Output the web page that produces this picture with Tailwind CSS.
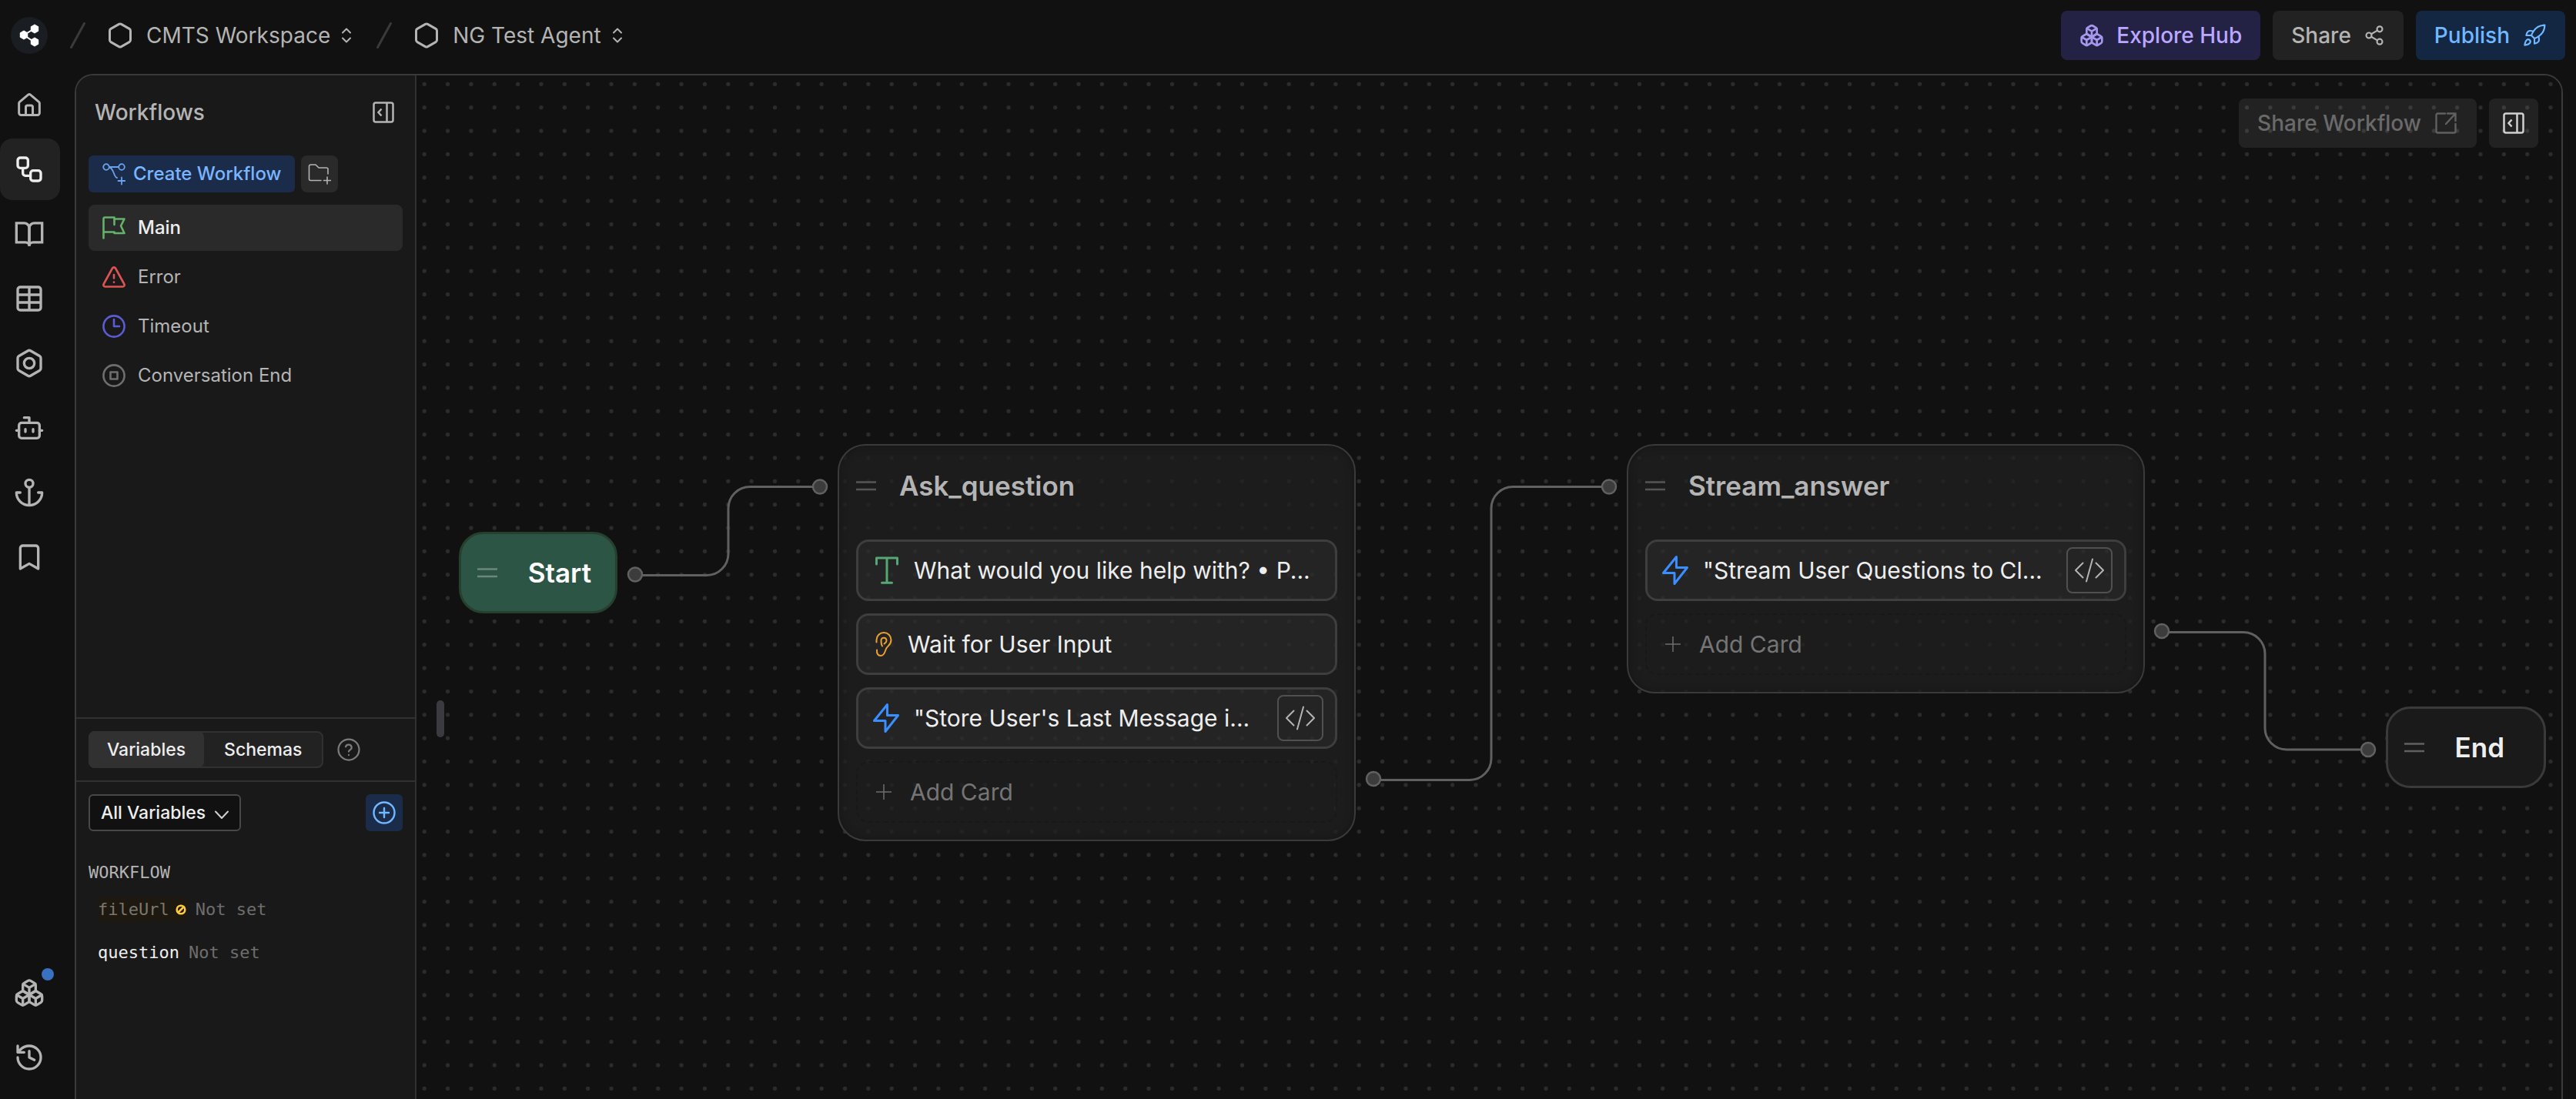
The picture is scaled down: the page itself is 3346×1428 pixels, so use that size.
<!DOCTYPE html>
<html lang="en">
<head>
<meta charset="utf-8">
<title>NG Test Agent – Workflows</title>
<meta name="viewport" content="width=device-width, initial-scale=1">
<script src="https://cdn.jsdelivr.net/npm/@tailwindcss/browser@4"></script>
</head>
<body class="bg-[#111111] text-[#b4b4b4] font-['Inter',sans-serif] antialiased">

<!-- Shared icon symbols -->
<svg class="hidden" aria-hidden="true">
  <symbol id="i-home" viewBox="0 0 24 24"><path d="M3.7 9.6 11 3.4a1.6 1.6 0 0 1 2 0l7.300 6.200a1.600 1.600 0 0 1 .6 1.200V19.200a1.800 1.800 0 0 1-1.800 1.800H4.900a1.800 1.800 0 0 1-1.800-1.800V10.800a1.600 1.600 0 0 1 .6-1.200Z"/><path d="M9 21v-6.800a1.500 1.500 0 0 1 1.500-1.500h3a1.500 1.500 0 0 1 1.500 1.500V21"/></symbol>
  <symbol id="i-flow" viewBox="0 0 24 24"><rect x="3" y="3" width="8" height="8" rx="2"/><path d="M7 11v4a2 2 0 0 0 2 2h4"/><rect x="13" y="13" width="8" height="8" rx="2"/></symbol>
  <symbol id="i-book" viewBox="0 0 24 24"><path d="M2 3.500h6a4 4 0 0 1 4 4v14a3 3 0 0 0-3-3H2z"/><path d="M22 3.500h-6a4 4 0 0 0-4 4v14a3 3 0 0 1 3-3h7z"/></symbol>
  <symbol id="i-table" viewBox="0 0 24 24"><rect x="3" y="3" width="18" height="18" rx="2"/><path d="M12 3v18M3 9h18M3 15h18"/></symbol>
  <symbol id="i-hex" viewBox="0 0 24 24"><path d="M21 16V8a2 2 0 0 0-1-1.730l-7-4a2 2 0 0 0-2 0l-7 4A2 2 0 0 0 3 8v8a2 2 0 0 0 1 1.730l7 4a2 2 0 0 0 2 0l7-4A2 2 0 0 0 21 16z"/></symbol>
  <symbol id="i-nut" viewBox="0 0 24 24"><path d="M21 16V8a2 2 0 0 0-1-1.730l-7-4a2 2 0 0 0-2 0l-7 4A2 2 0 0 0 3 8v8a2 2 0 0 0 1 1.730l7 4a2 2 0 0 0 2 0l7-4A2 2 0 0 0 21 16z"/><circle cx="12" cy="12" r="4"/></symbol>
  <symbol id="i-bot" viewBox="0 0 24 24"><path d="M12 8V4H8M2 14h2M20 14h2M15 13v2M9 13v2"/><rect x="4" y="8" width="16" height="12" rx="2"/></symbol>
  <symbol id="i-anchor" viewBox="0 0 24 24"><circle cx="12" cy="5" r="3"/><path d="M12 22V8M5 12H2a10 10 0 0 0 20 0h-3"/></symbol>
  <symbol id="i-mark" viewBox="0 0 24 24"><path d="m19 21-7-4-7 4V5a2 2 0 0 1 2-2h10a2 2 0 0 1 2 2v16z"/></symbol>
  <symbol id="i-boxes" viewBox="0 0 24 24"><path d="M2.970 12.920A2 2 0 0 0 2 14.630v3.240a2 2 0 0 0 .970 1.710l3 1.800a2 2 0 0 0 2.060 0L12 19v-5.500l-5-3-4.030 2.420Z"/><path d="m7 16.500-4.740-2.850M7 16.500l5-3M7 16.500v5.170"/><path d="M12 13.500V19l3.970 2.380a2 2 0 0 0 2.060 0l3-1.800a2 2 0 0 0 .970-1.710v-3.240a2 2 0 0 0-.970-1.710L17 10.500l-5 3Z"/><path d="m17 16.500-5-3M17 16.500l4.740-2.850M17 16.500v5.170"/><path d="M7.970 4.420A2 2 0 0 0 7 6.130v4.370l5 3 5-3V6.130a2 2 0 0 0-.970-1.710l-3-1.800a2 2 0 0 0-2.060 0l-3 1.800Z"/><path d="M12 8 7.260 5.150M12 8l4.740-2.850M12 13.500V8"/></symbol>
  <symbol id="i-history" viewBox="0 0 24 24"><path d="M3 12a9 9 0 1 0 9-9 9.750 9.750 0 0 0-6.740 2.740L3 8M3 3v5h5M12 7v5l4 2"/></symbol>
  <symbol id="i-share" viewBox="0 0 24 24"><circle cx="18" cy="5" r="3"/><circle cx="6" cy="12" r="3"/><circle cx="18" cy="19" r="3"/><path d="m8.600 13.500 6.800 4M15.400 6.500l-6.800 4"/></symbol>
  <symbol id="i-rocket" viewBox="0 0 24 24"><path d="M4.500 16.500c-1.500 1.260-2 5-2 5s3.740-.5 5-2c.71-.84.7-2.130-.09-2.910a2.180 2.180 0 0 0-2.910-.09z"/><path d="m12 15-3-3a22 22 0 0 1 2-3.950A12.880 12.880 0 0 1 22 2c0 2.720-.78 7.500-6 11a22.350 22.350 0 0 1-4 2z"/><path d="M9 12H4s.55-3.030 2-4c1.620-1.080 5 0 5 0M12 15v5s3.030-.55 4-2c1.080-1.620 0-5 0-5"/></symbol>
  <symbol id="i-updown" viewBox="0 0 20 24"><path d="M5 8.500 10 3.500l5 5M5 15.500l5 5 5-5"/></symbol>
  <symbol id="i-slash" viewBox="0 0 20 34"><path d="M18.500 1.500 1.500 32.500"/></symbol>
  <symbol id="i-panel" viewBox="0 0 28 28"><rect x="1.500" y="1.500" width="25" height="25" rx="2.500"/><path d="M18.500 1.500v25M11.500 9.500 7.500 14l4 4.500"/></symbol>
  <symbol id="i-bolt" viewBox="0 0 36 40"><path d="M19.500 2.500 2.500 23.500H17V37.500L33.500 16.500H19.500Z"/></symbol>
  <symbol id="i-code" viewBox="0 0 40 32"><path d="M11.500 6.500 2 16l9.500 9.500M28.500 6.500 38 16l-9.500 9.500M24 1.500 16 30.500"/></symbol>
  <symbol id="i-handle" viewBox="0 0 26 14"><path d="M0 2.500h26M0 12h26"/></symbol>
  <symbol id="i-plus" viewBox="0 0 20 20"><path d="M10 0v20M0 10h20"/></symbol>
</svg>

<div class="flex min-h-screen flex-col">

  <!-- Top bar -->
  <header class="flex h-24 shrink-0 items-center justify-between pl-[14px] pr-[14px] pb-1">
    <nav class="flex items-center text-[28px] leading-9" aria-label="Breadcrumb">
      <a href="#" aria-label="Home" class="flex size-12 items-center justify-center rounded-full bg-[#1a1d22]">
        <svg class="h-[30px] w-[26px]" viewBox="0 0 26 30" fill="#fff" stroke="#fff"><path d="M20 6 6 14.500 20 24" fill="none" stroke-width="2"/><path stroke-width="2" stroke-linejoin="round" d="m20 1.500 4.200 2.500v5L20 11.500 15.800 9V4ZM6 9.500l4.200 2.500v5L6 19.500 1.800 17v-5ZM20 18.500l4.200 2.500v5L20 28.500 15.800 26v-5Z"/></svg>
      </a>
      <svg class="mx-[29px] h-[34px] w-5 fill-none stroke-[#3a3a3a] stroke-[3px]" stroke-linecap="round"><use href="#i-slash"/></svg>
      <button class="flex items-center">
        <svg class="size-9 -mx-[2px] fill-none stroke-[#b4b4b4] stroke-2" stroke-linejoin="round"><use href="#i-hex"/></svg>
        <span class="ml-[18px]">CMTS Workspace</span>
        <svg class="ml-[11px] h-6 w-5 fill-none stroke-[#b4b4b4] stroke-2" stroke-linecap="round" stroke-linejoin="round"><use href="#i-updown"/></svg>
      </button>
      <svg class="mx-[29px] h-[34px] w-5 fill-none stroke-[#3a3a3a] stroke-[3px]" stroke-linecap="round"><use href="#i-slash"/></svg>
      <button class="flex items-center">
        <svg class="size-9 -mx-[2px] fill-none stroke-[#b4b4b4] stroke-2" stroke-linejoin="round"><use href="#i-hex"/></svg>
        <span class="ml-[18px]">NG Test Agent</span>
        <svg class="ml-[11px] h-6 w-5 fill-none stroke-[#b4b4b4] stroke-2" stroke-linecap="round" stroke-linejoin="round"><use href="#i-updown"/></svg>
      </button>
    </nav>
    <div class="flex items-center gap-4 text-[28px] font-medium leading-9">
      <button class="flex h-16 items-center gap-4 rounded-lg bg-[#232144] px-6 text-[#baa7ff]">
        <svg class="size-8 fill-none stroke-[#a598ec] stroke-2" stroke-linecap="round" stroke-linejoin="round"><use href="#i-boxes"/></svg>
        Explore Hub
      </button>
      <button class="flex h-16 items-center gap-4 rounded-lg bg-[#222222] px-6">
        Share
        <svg class="size-7 fill-none stroke-[#b4b4b4] stroke-[1.800px]" stroke-linecap="round"><use href="#i-share"/></svg>
      </button>
      <button class="flex h-16 items-center gap-4 rounded-lg bg-[#132743] px-6 text-[#70b8ff]">
        Publish
        <svg class="size-8 fill-none stroke-[#70b8ff] stroke-[1.600px]" stroke-linecap="round" stroke-linejoin="round"><use href="#i-rocket"/></svg>
      </button>
    </div>
  </header>

  <div class="flex flex-1 pr-[17px]">

    <!-- Icon rail -->
    <nav class="flex w-[97px] shrink-0 flex-col justify-between pb-[14px]" aria-label="Main">
      <ul class="flex flex-col gap-1 fill-none stroke-[#b4b4b4] stroke-2">
        <li><a href="#" aria-label="Home" class="flex h-20 w-[78px] items-center justify-center pr-[2px]"><svg class="size-9" stroke-linejoin="round"><use href="#i-home"/></svg></a></li>
        <li><a href="#" aria-label="Workflows" aria-current="page" class="flex h-20 w-[78px] items-center justify-center rounded-2xl bg-[#222222] stroke-[#eeeeee] pr-[2px]"><svg class="size-10"><use href="#i-flow"/></svg></a></li>
        <li><a href="#" aria-label="Knowledge" class="flex h-20 w-[78px] items-center justify-center pr-[2px]"><svg class="size-10"><use href="#i-book"/></svg></a></li>
        <li><a href="#" aria-label="Tables" class="flex h-20 w-[78px] items-center justify-center pr-[2px]"><svg class="size-10"><use href="#i-table"/></svg></a></li>
        <li><a href="#" aria-label="Integrations" class="flex h-20 w-[78px] items-center justify-center pr-[2px]"><svg class="size-10"><use href="#i-nut"/></svg></a></li>
        <li><a href="#" aria-label="Agents" class="flex h-20 w-[78px] items-center justify-center pr-[2px]"><svg class="size-10" stroke-linecap="round" stroke-linejoin="round"><use href="#i-bot"/></svg></a></li>
        <li><a href="#" aria-label="Hooks" class="flex h-20 w-[78px] items-center justify-center pr-[2px]"><svg class="size-10" stroke-linecap="round" stroke-linejoin="round"><use href="#i-anchor"/></svg></a></li>
        <li><a href="#" aria-label="Library" class="flex h-20 w-[78px] items-center justify-center pr-[2px]"><svg class="size-10" stroke-linejoin="round"><use href="#i-mark"/></svg></a></li>
      </ul>
      <ul class="flex flex-col gap-1 fill-none stroke-[#b4b4b4] stroke-2">
        <li><a href="#" aria-label="Hub" class="relative flex h-20 w-[78px] items-center justify-center pr-[2px]"><svg class="size-10" stroke-linecap="round" stroke-linejoin="round"><use href="#i-boxes"/></svg><span class="absolute right-2 top-2 size-4 rounded-full bg-[#3b6fbf]"></span></a></li>
        <li><a href="#" aria-label="History" class="flex h-20 w-[78px] items-center justify-center pr-[2px]"><svg class="size-10" stroke-linecap="round" stroke-linejoin="round"><use href="#i-history"/></svg></a></li>
      </ul>
    </nav>

    <div class="flex flex-1 overflow-hidden rounded-t-3xl border-x-2 border-t-2 border-[#3a3a3a]">

      <!-- Workflow panel -->
      <aside class="flex w-[442px] shrink-0 flex-col border-r-2 border-[#313131] bg-[#191919] text-[24px] leading-8">
        <section class="flex-1">
          <div class="flex h-24 items-center justify-between pl-6 pr-[27px]">
            <h2 class="text-[28px] font-medium leading-9">Workflows</h2>
            <button aria-label="Collapse panel"><svg class="size-7 fill-none stroke-[#b4b4b4] stroke-[2.500px]"><use href="#i-panel"/></svg></button>
          </div>
          <div class="flex gap-2 px-4 pt-2">
            <button class="flex h-12 items-center gap-[10px] rounded-md bg-[#1a2c4a] px-[18px] font-medium text-[#7ab5ff]">
              <svg class="size-[30px]" viewBox="0 0 30 30" fill="none" stroke="#6ba3ea" stroke-width="1.800" stroke-linecap="round"><circle cx="5" cy="6" r="3.800"/><circle cx="25" cy="6" r="3.800"/><path d="M9 6h12M9 6.500c6 1 5.500 12.500 10 13.500M25 19.500v9M20.500 24h9"/></svg>
              Create Workflow
            </button>
            <button aria-label="Create folder" class="flex size-12 items-center justify-center rounded-lg bg-[#2a2a2a]">
              <svg class="size-[30px]" viewBox="0 0 30 30" fill="none" stroke="#b4b4b4" stroke-width="1.600" stroke-linecap="round" stroke-linejoin="round"><path d="M17 23.500H3.500a2 2 0 0 1-2-2V5a2 2 0 0 1 2-2H10l4 4h10a2 2 0 0 1 2 2v6M25 19v9M20.500 23.500h9"/></svg>
            </button>
          </div>
          <ul class="mt-4 flex flex-col gap-1 px-4">
            <li><a href="#" class="flex h-[60px] items-center gap-4 rounded-lg bg-[#2a2a2a] pl-[18px] font-medium text-[#eeeeee]">
              <svg class="size-[30px]" viewBox="0 0 30 30" fill="none" stroke="#65b36a" stroke-width="2.600" stroke-linecap="round" stroke-linejoin="round"><path d="M1.500 28.500V3a1.500 1.500 0 0 1 1.500-1.500H15.500V11M1.500 20.500H15.500M15.500 3.500H28.500L24 12.500l4.500 9.500H15.500"/></svg>Main</a></li>
            <li><a href="#" class="flex h-[60px] items-center gap-4 rounded-lg pl-[18px]">
              <svg class="size-[30px]" viewBox="0 0 30 30" fill="none" stroke="#dc5453" stroke-width="2.600" stroke-linecap="round" stroke-linejoin="round"><path d="M13 3.500a2.300 2.300 0 0 1 4 0L28.300 24a2.300 2.300 0 0 1-2 3.500H3.700a2.300 2.300 0 0 1-2-3.500ZM15 12v4.500M15 21.500v.3"/></svg>Error</a></li>
            <li><a href="#" class="flex h-[60px] items-center gap-4 rounded-lg pl-[18px]">
              <svg class="size-[30px]" viewBox="0 0 30 30" fill="none" stroke="#5b5bd6" stroke-width="2.600" stroke-linecap="round" stroke-linejoin="round"><circle cx="15" cy="15" r="13.600"/><path d="M15 6v9h7"/></svg>Timeout</a></li>
            <li><a href="#" class="flex h-[60px] items-center gap-4 rounded-lg pl-[18px]">
              <svg class="size-[30px]" viewBox="0 0 30 30" fill="none" stroke="#6e6e6e" stroke-width="2.600" stroke-linejoin="round"><circle cx="15" cy="15" r="13.600"/><rect x="10.500" y="10.500" width="9" height="9"/></svg>Conversation End</a></li>
          </ul>
        </section>

        <section class="h-[496px] shrink-0 border-t-2 border-[#313131]">
          <div class="flex h-[82px] items-center border-b-2 border-[#313131] px-4">
            <div role="tablist" class="flex h-12 rounded-lg border-2 border-[#313131] bg-[#222222] text-[23px] font-medium text-[#eeeeee]">
              <button role="tab" aria-selected="true" class="-my-[2px] -ml-[2px] rounded-lg bg-[#313131] px-6">Variables</button>
              <button role="tab" aria-selected="false" class="px-[26px]">Schemas</button>
            </div>
            <button aria-label="Help" class="ml-[18px]"><svg class="size-[30px]" viewBox="0 0 24 24" fill="none" stroke="#7b7b7b" stroke-width="1.800" stroke-linecap="round"><circle cx="12" cy="12" r="10.800"/><path d="M8.800 9a3.200 3.200 0 0 1 6.200 1c0 2-3 2.500-3 4M12 17.500v.1"/></svg></button>
          </div>
          <div class="flex items-center justify-between px-4 pt-4">
            <div class="relative">
              <select aria-label="Variable filter" class="h-12 w-[198px] appearance-none rounded-md border-2 border-[#484848] bg-[#111111] pl-[14px] text-[23px] font-medium text-[#eeeeee]"><option>All Variables</option></select>
              <svg class="pointer-events-none absolute right-4 top-[21px] h-[12px] w-[18px]" viewBox="0 0 18 12" fill="none" stroke="#cfcfcf" stroke-width="2" stroke-linecap="round" stroke-linejoin="round"><path d="m1 1.500 8 8.500 8-8.500"/></svg>
            </div>
            <button aria-label="Add variable" class="flex size-12 items-center justify-center rounded-md bg-[#1a2c4a]"><svg class="size-[30px]" viewBox="0 0 30 30" fill="none" stroke="#70b8ff" stroke-width="2.400" stroke-linecap="round"><circle cx="15" cy="15" r="13.500"/><path d="M15 9v12M9 15h12"/></svg></button>
          </div>
          <div class="px-4 font-['DejaVu_Sans_Mono','Liberation_Mono',monospace] text-[22px]">
            <h3 class="mt-[38px] h-8 leading-8">WORKFLOW</h3>
            <ul class="px-3 text-[#6e6e6e]">
              <li class="mt-4 flex gap-3"><span class="flex h-8 items-center gap-2 bg-[#1d1810] text-[#7c776b]">fileUrl<svg class="size-[14px]" viewBox="0 0 14 14" fill="none" stroke="#ffca3d" stroke-width="2.600"><circle cx="7" cy="7" r="5.300"/><path d="m3.500 10.500 7-7"/></svg></span>Not set</li>
              <li class="mt-6 flex gap-3"><span class="text-[#eeeeee]">question</span>Not set</li>
            </ul>
          </div>
        </section>
      </aside>

      <!-- Canvas -->
      <main class="relative flex-1 overflow-hidden bg-[#111111]">
        <svg class="absolute inset-0 size-full" aria-hidden="true">
          <defs><pattern id="dots" x="25.400" y="-3.800" width="30.350" height="30.350" patternUnits="userSpaceOnUse"><circle cx="15.170" cy="15.170" r="2.600" fill="#2c2c2c"/></pattern></defs>
          <rect width="100%" height="100%" fill="url(#dots)"/>
          <g fill="none" stroke="#606060" stroke-width="3">
            <path d="M284 649.500H377A28 28 0 0 0 405 621.500V562.500A28 28 0 0 1 433 534.500H524"/>
            <path d="M1243 915.500H1368A28 28 0 0 0 1396 887.500V562.500A28 28 0 0 1 1424 534.500H1549"/>
            <path d="M2267 723.500H2373A28 28 0 0 1 2401 751.500V848A28 28 0 0 0 2429 876H2535"/>
          </g>
          <g fill="#3c3c3c" stroke="#616161" stroke-width="2.500">
            <circle cx="284" cy="648.500" r="9"/><circle cx="524" cy="534.500" r="9"/>
            <circle cx="1243" cy="914" r="9"/><circle cx="1549" cy="534.500" r="9"/>
            <circle cx="2267" cy="722" r="9"/><circle cx="2535" cy="876" r="9"/>
          </g>
        </svg>

        <div class="absolute left-[26px] top-[812px] h-12 w-[10px] rounded-full bg-[#3a3a40]"></div>

        <div class="absolute right-[30px] top-[30px] flex gap-4 text-[28px] font-medium leading-9">
          <button disabled class="flex h-16 items-center gap-4 rounded-lg bg-white/[.07] px-6 text-[#6a6a6a]">Share Workflow
            <svg class="size-8" viewBox="0 0 32 32" fill="none" stroke="#606060" stroke-width="2.400" stroke-linecap="round" stroke-linejoin="round"><path d="M15 3.500H5.500a2 2 0 0 0-2 2V26.500a2 2 0 0 0 2 2H26.500a2 2 0 0 0 2-2V17M18 3.500H28.500V13M28.500 3.500 16 17"/></svg></button>
          <button aria-label="Open side panel" class="flex size-16 items-center justify-center rounded-lg bg-white/[.07]"><svg class="size-7 fill-none stroke-[#d0d0d0] stroke-[2.500px]"><use href="#i-panel"/></svg></button>
        </div>

        <!-- Start -->
        <article class="absolute left-[55px] top-[593px] flex h-[106px] w-[206px] items-center justify-between rounded-[32px] border-[3px] border-[#26402e] bg-[#2c5545] pl-[21px] pr-[31px]">
          <svg class="h-[14px] w-[26px] stroke-[#6c887d] stroke-[2.500px]"><use href="#i-handle"/></svg>
          <h3 class="text-[35px] font-semibold leading-10 text-white">Start</h3>
        </article>

        <!-- Ask_question -->
        <article class="absolute left-[547px] top-[479px] w-[673px] rounded-[36px] border-2 border-[#3a3a3a] bg-[#202020]/75 px-[22px] pb-[22px] shadow-[inset_0_0_12px_rgba(0,0,0,0.25)]">
          <div class="mb-[18px] flex h-[104px] items-center gap-[30px]">
            <svg class="h-[14px] w-[26px] stroke-[#555555] stroke-[2.500px]"><use href="#i-handle"/></svg>
            <h3 class="text-[35px] font-semibold leading-10">Ask_question</h3>
          </div>
          <div class="flex flex-col gap-4 text-[30px] leading-10 text-[#eeeeee]">
            <div class="flex h-20 items-center gap-5 rounded-2xl border-[3px] border-[#3e3e3e] bg-white/[.04] px-[22px]">
              <svg class="h-9 w-[30px] shrink-0" viewBox="0 0 30 36" fill="none" stroke="#55a873" stroke-width="3" stroke-linecap="round" stroke-linejoin="round"><path d="M1.500 10V2H28.500V10M15 2V34M8.500 34.200H21.500"/></svg>
              <span class="whitespace-nowrap">What would you like help with? • P...</span>
            </div>
            <div class="flex h-20 items-center gap-5 rounded-2xl border-[3px] border-[#3e3e3e] bg-white/[.04] px-[22px]">
              <svg class="h-8 w-[22px] shrink-0" viewBox="0 0 22 32" fill="none" stroke="#eda032" stroke-width="2" stroke-linecap="round"><path d="M1.500 13.500V10.500a9.500 9.500 0 0 1 19 0c0 6-4 7.500-6 10.500s-2 10-7.500 10c-3.500 0-5.500-2.500-5-7.500"/><path d="M9 18.500c-1.500-2-1.500-5-1.500-7.500 0-4.500 7-4.500 7 .5 0 2.500-2.500 3.500-3 4"/></svg>
              <span class="whitespace-nowrap">Wait for User Input</span>
            </div>
            <div class="flex h-20 items-center rounded-2xl border-[3px] border-[#3e3e3e] bg-white/[.04] pl-[18px] pr-[15px]">
              <svg class="h-10 w-9 shrink-0 fill-none stroke-[#3b8eff] stroke-[3px]" stroke-linejoin="round"><use href="#i-bolt"/></svg>
              <span class="ml-[18px] flex-1 whitespace-nowrap">"Store User's Last Message i...</span>
              <button aria-label="View code" class="flex size-[60px] items-center justify-center rounded-lg border-2 border-[#505050]"><svg class="h-8 w-10 fill-none stroke-[#b4b4b4] stroke-2" stroke-linecap="round" stroke-linejoin="round"><use href="#i-code"/></svg></button>
            </div>
            <button class="flex h-20 items-center gap-6 rounded-2xl border-2 border-dashed border-[#181818]/80 px-6 text-[#757575]"><svg class="size-5 stroke-[#6e6e6e] stroke-[1.500px]"><use href="#i-plus"/></svg>Add Card</button>
          </div>
        </article>

        <!-- Stream_answer -->
        <article class="absolute left-[1572px] top-[479px] w-[673px] rounded-[36px] border-2 border-[#3a3a3a] bg-[#202020]/75 px-[22px] pb-[22px] shadow-[inset_0_0_12px_rgba(0,0,0,0.25)]">
          <div class="mb-[18px] flex h-[104px] items-center gap-[30px]">
            <svg class="h-[14px] w-[26px] stroke-[#555555] stroke-[2.500px]"><use href="#i-handle"/></svg>
            <h3 class="text-[35px] font-semibold leading-10">Stream_answer</h3>
          </div>
          <div class="flex flex-col gap-4 text-[30px] leading-10 text-[#eeeeee]">
            <div class="flex h-20 items-center rounded-2xl border-[3px] border-[#3e3e3e] bg-white/[.04] pl-[18px] pr-[15px]">
              <svg class="h-10 w-9 shrink-0 fill-none stroke-[#3b8eff] stroke-[3px]" stroke-linejoin="round"><use href="#i-bolt"/></svg>
              <span class="ml-[18px] flex-1 whitespace-nowrap">"Stream User Questions to Cl...</span>
              <button aria-label="View code" class="flex size-[60px] items-center justify-center rounded-lg border-2 border-[#505050]"><svg class="h-8 w-10 fill-none stroke-[#b4b4b4] stroke-2" stroke-linecap="round" stroke-linejoin="round"><use href="#i-code"/></svg></button>
            </div>
            <button class="flex h-20 items-center gap-6 rounded-2xl border-2 border-dashed border-[#181818]/80 px-6 text-[#757575]"><svg class="size-5 stroke-[#6e6e6e] stroke-[1.500px]"><use href="#i-plus"/></svg>Add Card</button>
          </div>
        </article>

        <!-- End -->
        <article class="absolute left-[2558px] top-[820px] flex h-[106px] w-[208px] items-center justify-between rounded-[32px] border-[3px] border-[#3a3a3a] bg-[#1a1a1a] pl-[21px] pr-[51px]">
          <svg class="h-[14px] w-[26px] stroke-[#606060] stroke-[2.500px]"><use href="#i-handle"/></svg>
          <h3 class="text-[35px] font-semibold leading-10 text-[#eeeeee]">End</h3>
        </article>
      </main>
    </div>
  </div>
</div>
</body>
</html>
